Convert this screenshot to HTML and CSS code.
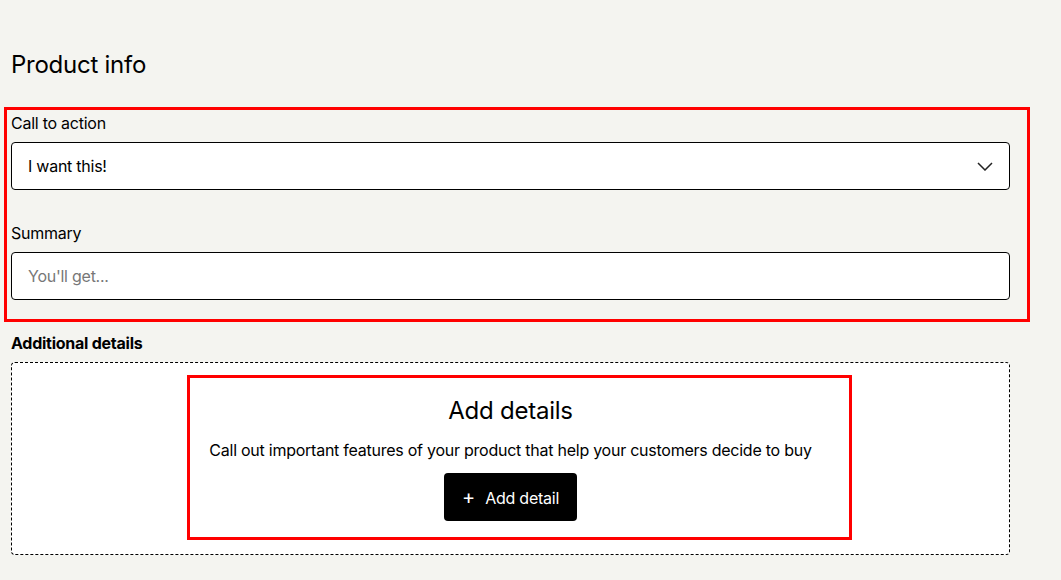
FILE: index.html
```html
<!DOCTYPE html>
<html lang="en">
<head>
    <meta charset="UTF-8">
    <meta name="viewport" content="width=device-width, initial-scale=1.0">
    <title>Product info</title>
    <link rel="stylesheet" href="styles.css">
</head>

<body>
    <div class="page">
        <h2 class="title">Product info</h2>

        <div class="fields">
            <div class="field">
                <label for="cta">Call to action</label>
                <div class="select">
                    <span>I want this!</span>
                    <svg width="16" height="9" viewBox="0 0 16 9">
                        <path d="M1 1 L8 8 L15 1" fill="none" stroke="#222" stroke-width="1.5"/>
                    </svg>
                </div>
            </div>

            <div class="field">
                <label for="summary">Summary</label>
                <input type="text" id="summary" placeholder="You'll get...">
            </div>

            <div class="field">
                <div class="label-bold">Additional details</div>
                <div class="details-box">
                    <h3>Add details</h3>
                    <p>Call out important features of your product that help your customers decide to buy</p>
                    <button type="button"><span class="plus">+</span> Add detail</button>
                </div>
            </div>
        </div>
    </div>

    <div class="mark mark-fields"></div>
    <div class="mark mark-details"></div>
</body>
</html>
```

FILE: styles.css
```css
body {
    margin: 0;
    font-family: Inter, "Liberation Sans", Arial, sans-serif;
    letter-spacing: -0.25px;
    background: #f4f4f0;
    color: black;
}

.page {
    width: 999px;
    padding: 50px 0 40px 11px;
}

.title {
    margin: 0 0 33px 0;
    font-size: 24px;
    font-weight: normal;
    line-height: 29px;
}

.fields {
    display: flex;
    flex-direction: column;
    gap: 32px;
}

.field {
    display: flex;
    flex-direction: column;
    gap: 8px;
}

.field label {
    font-size: 16px;
    line-height: 22px;
}

.label-bold {
    font-size: 16px;
    font-weight: bold;
    line-height: 22px;
}

.select,
.field input {
    box-sizing: border-box;
    height: 48px;
    border: 1px solid black;
    border-radius: 4px;
    background: white;
    font-family: inherit;
    letter-spacing: inherit;
    font-size: 16px;
    padding: 0 16px;
}

.select {
    display: flex;
    align-items: center;
    justify-content: space-between;
}

.field input::placeholder {
    color: #777;
}

.details-box {
    border: 1px dashed black;
    border-radius: 4px;
    background: white;
    padding: 32px 16px 33px;
    display: flex;
    flex-direction: column;
    align-items: center;
    gap: 12px;
}

.details-box h3 {
    margin: 0;
    font-size: 24px;
    font-weight: normal;
    line-height: 32px;
}

.details-box p {
    margin: 0;
    font-size: 16px;
    line-height: 22px;
}

button {
    height: 48px;
    padding: 0 18px;
    border: none;
    border-radius: 4px;
    background: black;
    color: white;
    font-family: inherit;
    letter-spacing: inherit;
    font-size: 16px;
}

.plus {
    margin-right: 6px;
    font-size: 20px;
}

/* red review marks drawn over the page */
.mark {
    position: absolute;
    border: 3px solid #ff0000;
    box-sizing: border-box;
}

.mark-fields {
    left: 4px;
    top: 107px;
    width: 1026px;
    height: 215px;
}

.mark-details {
    left: 187px;
    top: 375px;
    width: 665px;
    height: 165px;
}
```
